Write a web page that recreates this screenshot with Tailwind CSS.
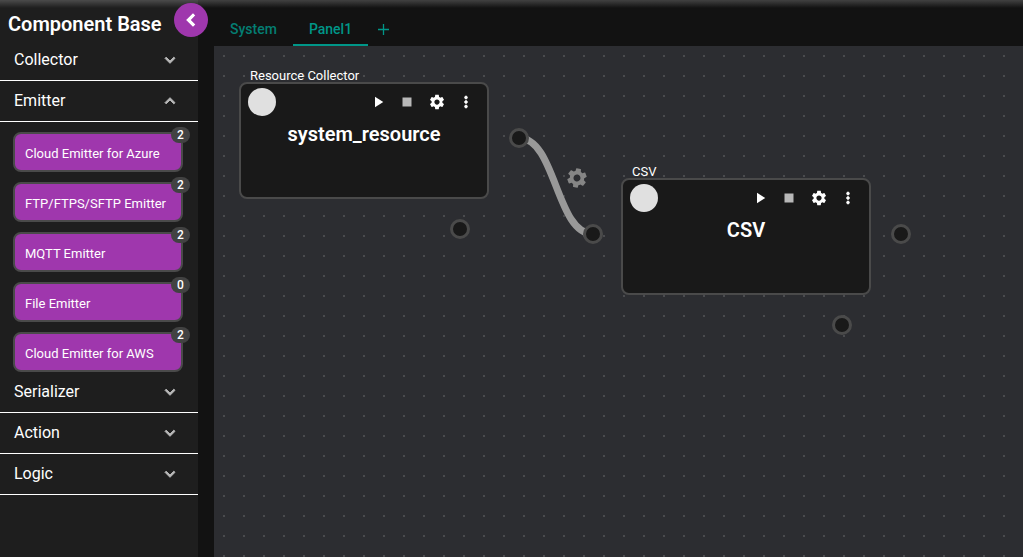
<!DOCTYPE html>
<html lang="en">
<head>
<meta charset="utf-8">
<meta name="viewport" content="width=device-width, initial-scale=1">
<title>Component Base</title>
<script src="https://cdn.jsdelivr.net/npm/@tailwindcss/browser@4"></script>
</head>
<body class="relative flex h-screen overflow-hidden bg-[#121212] font-[Roboto,sans-serif] text-white">
<svg class="hidden">
  <symbol id="down" viewBox="0 0 24 24"><path d="M7.41 8.59 12 13.17l4.59-4.58L18 10l-6 6-6-6z" fill="currentColor" stroke="currentColor" stroke-width="1.2"/></symbol>
  <symbol id="play" viewBox="0 0 24 24"><path d="M8 5v14l11-7z" fill="currentColor"/></symbol>
  <symbol id="stop" viewBox="0 0 24 24"><path d="M6 6h12v12H6z" fill="currentColor"/></symbol>
  <symbol id="more" viewBox="0 0 24 24"><path d="M12 8c1.100 0 2-.9 2-2s-.9-2-2-2-2 .9-2 2 .9 2 2 2zm0 2c-1.100 0-2 .9-2 2s.9 2 2 2 2-.9 2-2-.9-2-2-2zm0 6c-1.100 0-2 .9-2 2s.9 2 2 2 2-.9 2-2-.9-2-2-2z" fill="currentColor" stroke="currentColor" stroke-width=".8"/></symbol>
  <symbol id="gear" viewBox="0 0 24 24"><path d="M19.140 12.940c.04-.3.06-.61.06-.94 0-.32-.02-.64-.07-.94l2.030-1.580c.18-.14.23-.41.12-.61l-1.920-3.320c-.12-.22-.37-.29-.59-.22l-2.390.96c-.5-.38-1.030-.7-1.620-.94l-.36-2.540c-.04-.24-.24-.41-.48-.41h-3.840c-.24 0-.43.17-.47.41l-.36 2.540c-.59.24-1.130.57-1.620.94l-2.390-.96c-.22-.08-.47 0-.59.22L2.740 8.870c-.12.21-.08.47.12.61l2.030 1.580c-.05.3-.09.63-.09.94s.02.64.07.94l-2.030 1.580c-.18.14-.23.41-.12.61l1.920 3.320c.12.22.37.29.59.22l2.390-.96c.5.38 1.030.7 1.620.94l.36 2.540c.05.24.24.41.48.41h3.840c.24 0 .44-.17.47-.41l.36-2.540c.59-.24 1.130-.56 1.620-.94l2.390.96c.22.08.47 0 .59-.22l1.920-3.320c.12-.22.07-.47-.12-.61l-2.010-1.580zM12 15.500c-1.930 0-3.500-1.570-3.500-3.500s1.570-3.500 3.500-3.500 3.500 1.570 3.500 3.500-1.570 3.500-3.500 3.500z" fill="currentColor"/></symbol>
</svg>

<aside class="relative w-[198px] shrink-0 bg-[#1e1e1e]">
  <h1 class="flex h-10 items-center px-2 pt-2 text-xl font-semibold whitespace-nowrap">Component Base</h1>
  <button aria-label="Collapse sidebar" class="absolute top-[3px] -right-[10px] z-10 flex size-[34px] items-center justify-center rounded-full bg-[#9f37ad]">
    <svg class="size-6 rotate-90"><use href="#down"/></svg>
  </button>
  <nav>
    <button class="flex h-[41px] w-full items-center justify-between border-b border-white pr-[18px] pl-3.5">Collector<svg class="size-5 text-[#b8b8b8]"><use href="#down"/></svg></button>
    <button class="flex h-[41px] w-full items-center justify-between border-b border-white pr-[18px] pl-3.5" aria-expanded="true">Emitter<svg class="size-5 rotate-180 text-[#b8b8b8]"><use href="#down"/></svg></button>
    <ul class="flex flex-col gap-2.5 pt-2.5 pr-[15px] pl-[13px] text-[13px]">
      <li class="relative"><button class="h-10 w-full rounded-lg border-2 border-[#4a4a4a] bg-[#9f37ad] px-2.5 pt-1 text-left">Cloud Emitter for Azure</button><span class="absolute -top-[5px] -right-[7px] w-[19px] rounded-full bg-[#424242] text-center text-xs font-medium">2</span></li>
      <li class="relative"><button class="h-10 w-full rounded-lg border-2 border-[#4a4a4a] bg-[#9f37ad] px-2.5 pt-1 text-left">FTP/FTPS/SFTP Emitter</button><span class="absolute -top-[5px] -right-[7px] w-[19px] rounded-full bg-[#424242] text-center text-xs font-medium">2</span></li>
      <li class="relative"><button class="h-10 w-full rounded-lg border-2 border-[#4a4a4a] bg-[#9f37ad] px-2.5 pt-1 text-left">MQTT Emitter</button><span class="absolute -top-[5px] -right-[7px] w-[19px] rounded-full bg-[#424242] text-center text-xs font-medium">2</span></li>
      <li class="relative"><button class="h-10 w-full rounded-lg border-2 border-[#4a4a4a] bg-[#9f37ad] px-2.5 pt-1 text-left">File Emitter</button><span class="absolute -top-[5px] -right-[7px] w-[19px] rounded-full bg-[#424242] text-center text-xs font-medium">0</span></li>
      <li class="relative"><button class="h-10 w-full rounded-lg border-2 border-[#4a4a4a] bg-[#9f37ad] px-2.5 pt-1 text-left">Cloud Emitter for AWS</button><span class="absolute -top-[5px] -right-[7px] w-[19px] rounded-full bg-[#424242] text-center text-xs font-medium">2</span></li>
    </ul>
    <button class="flex h-[41px] w-full items-center justify-between border-b border-white pr-[18px] pl-3.5">Serializer<svg class="size-5 text-[#b8b8b8]"><use href="#down"/></svg></button>
    <button class="flex h-[41px] w-full items-center justify-between border-b border-white pr-[18px] pl-3.5">Action<svg class="size-5 text-[#b8b8b8]"><use href="#down"/></svg></button>
    <button class="flex h-[41px] w-full items-center justify-between border-b border-white pr-[18px] pl-3.5">Logic<svg class="size-5 text-[#b8b8b8]"><use href="#down"/></svg></button>
  </nav>
</aside>

<main class="flex min-w-0 flex-1 flex-col pl-4">
  <div class="flex h-[46px] items-end text-sm font-medium text-[#009688]" role="tablist">
    <button role="tab" class="h-[34px] px-4 text-[#047e73]">System</button>
    <button role="tab" aria-selected="true" class="h-[34px] border-b-2 border-[#009688] px-4 pt-0.5">Panel1</button>
    <button aria-label="Add panel" class="flex h-[34px] w-[30px] items-center justify-center"><svg class="size-[11px]" viewBox="0 0 11 11"><path d="M5.500 0v11M0 5.500h11" stroke="currentColor" stroke-width="1.300"/></svg></button>
  </div>
  <div class="relative flex-1 overflow-hidden bg-[#2c2d31]">
    <svg class="absolute inset-0 size-full">
      <defs><pattern id="dots" width="20" height="20" patternUnits="userSpaceOnUse"><rect x="9" y="9" width="2" height="2" fill="#4a4b4e"/></pattern></defs>
      <rect width="100%" height="100%" fill="url(#dots)"/>
      <path d="M305 92C342 92 342 188 379 188" fill="none" stroke="#999" stroke-width="7"/>
      <g fill="#191919" stroke="#4a4a4a" stroke-width="3"><circle cx="305" cy="92" r="8.500"/><circle cx="246" cy="183" r="8.500"/><circle cx="379" cy="188" r="8.500"/><circle cx="687" cy="188" r="8.500"/><circle cx="628" cy="279" r="8.500"/></g>
    </svg>
    <button aria-label="Connection settings" class="absolute top-[120px] left-[351px] text-[#858585]"><svg class="size-6 rotate-10"><use href="#gear"/></svg></button>

    <section class="absolute top-[22px] left-[25px] w-[250px]">
      <p class="h-3.5 px-[11px] text-[13px] leading-4">Resource Collector</p>
      <div class="h-[117px] rounded-lg border-2 border-[#4a4a4a] bg-[#191919] px-[7px] pt-1">
        <div class="flex items-center">
          <span class="mr-auto size-7 rounded-full bg-[#e0e0e0]"></span>
          <div class="flex items-center pb-px">
            <button aria-label="Start" class="flex w-7 justify-center"><svg class="size-[18px]"><use href="#play"/></svg></button>
            <button aria-label="Stop" class="flex w-[30px] justify-center text-[#b8b8b8]"><svg class="size-[18px]"><use href="#stop"/></svg></button>
            <button aria-label="Settings" class="flex w-[30px] justify-center"><svg class="size-[18px]"><use href="#gear"/></svg></button>
            <button aria-label="More" class="flex w-7 justify-center"><svg class="size-[18px]"><use href="#more"/></svg></button>
          </div>
        </div>
        <h2 class="pt-1 text-center text-xl font-semibold">system_resource</h2>
      </div>
    </section>

    <section class="absolute top-[118px] left-[407px] w-[250px]">
      <p class="h-3.5 px-[11px] text-[13px] leading-4">CSV</p>
      <div class="h-[117px] rounded-lg border-2 border-[#4a4a4a] bg-[#191919] px-[7px] pt-1">
        <div class="flex items-center">
          <span class="mr-auto size-7 rounded-full bg-[#e0e0e0]"></span>
          <div class="flex items-center pb-px">
            <button aria-label="Start" class="flex w-7 justify-center"><svg class="size-[18px]"><use href="#play"/></svg></button>
            <button aria-label="Stop" class="flex w-[30px] justify-center text-[#b8b8b8]"><svg class="size-[18px]"><use href="#stop"/></svg></button>
            <button aria-label="Settings" class="flex w-[30px] justify-center"><svg class="size-[18px]"><use href="#gear"/></svg></button>
            <button aria-label="More" class="flex w-7 justify-center"><svg class="size-[18px]"><use href="#more"/></svg></button>
          </div>
        </div>
        <h2 class="pt-1 text-center text-xl font-semibold">CSV</h2>
      </div>
    </section>
  </div>
</main>
<div class="pointer-events-none absolute inset-x-0 top-0 h-2 bg-linear-to-b from-white/20 to-transparent"></div>
</body>
</html>
